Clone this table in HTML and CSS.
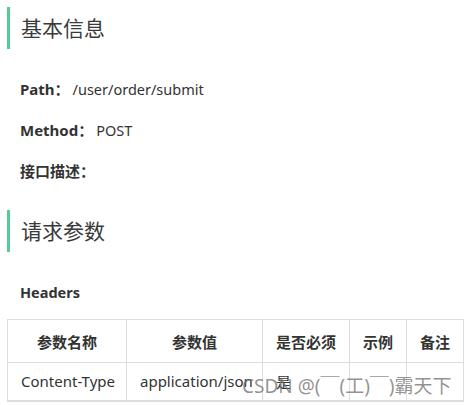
FILE: index.html
```html
<!DOCTYPE html>
<html lang="zh-CN">
<head>
    <meta charset="UTF-8">
    <title>接口文档</title>
    <link rel="stylesheet" href="styles.css">
</head>
<body>
    <div class="doc">
        <h2 class="section-title">基本信息</h2>
        <div class="info">
            <p class="info-row"><b>Path：</b><span class="info-value">/user/order/submit</span></p>
            <p class="info-row"><b>Method：</b><span class="info-value">POST</span></p>
            <p class="info-row"><b>接口描述：</b></p>
        </div>

        <h2 class="section-title">请求参数</h2>
        <h3 class="sub-title">Headers</h3>
        <table class="param-table">
            <thead>
                <tr>
                    <th class="col-name">参数名称</th>
                    <th class="col-value">参数值</th>
                    <th class="col-required">是否必须</th>
                    <th class="col-example">示例</th>
                    <th class="col-note">备注</th>
                </tr>
            </thead>
            <tbody>
                <tr>
                    <td>Content-Type</td>
                    <td>application/json</td>
                    <td>是</td>
                    <td></td>
                    <td></td>
                </tr>
            </tbody>
        </table>
    </div>
    <div class="watermark">CSDN @(￣(工)￣)霸天下</div>
</body>
</html>
```

FILE: styles.css
```css
:root {
    --color-text: #333333;
    --color-accent: #56cc92;
    --color-border: #dddddd;
}

* {
    margin: 0;
    padding: 0;
    box-sizing: border-box;
}

body {
    background: #ffffff;
    color: var(--color-text);
    font-family: "Noto Sans", "Noto Sans CJK SC", sans-serif;
    font-size: 15px;
    overflow: hidden;
}

.doc {
    padding: 7px 0 0 7px;
}

.section-title {
    border-left: 3px solid var(--color-accent);
    padding-left: 11px;
    height: 42px;
    line-height: 42px;
    font-size: 21px;
    font-weight: 400;
    color: #3a3a3a;
}

.info {
    padding: 20px 0 18px 13px;
}

.info-row {
    line-height: 41px;
    height: 41px;
}

.info-row b {
    font-weight: 700;
    margin-right: 3px;
}

.info-value {
    font-size: 14.5px;
}

.sub-title {
    margin-top: 20px;
    padding-left: 13px;
    font-size: 14.5px;
    line-height: 41px;
    height: 41px;
    font-weight: 700;
}

.param-table {
    margin-top: 6px;
    border-collapse: collapse;
    table-layout: fixed;
    width: 456px;
}

.param-table th,
.param-table td {
    border: 1px solid var(--color-border);
    padding: 0 13px;
    white-space: nowrap;
}

.param-table th {
    height: 43px;
    font-weight: 700;
    text-align: center;
}

.param-table td {
    height: 38px;
    text-align: left;
    border-bottom-width: 2px;
}

.col-name { width: 119px; }
.col-value { width: 136px; }
.col-required { width: 87px; }
.col-example { width: 57px; }
.col-note { width: 57px; }

.watermark {
    position: absolute;
    left: 242px;
    top: 371px;
    font-size: 19px;
    color: rgba(110, 110, 110, 0.75);
    white-space: nowrap;
}
```
